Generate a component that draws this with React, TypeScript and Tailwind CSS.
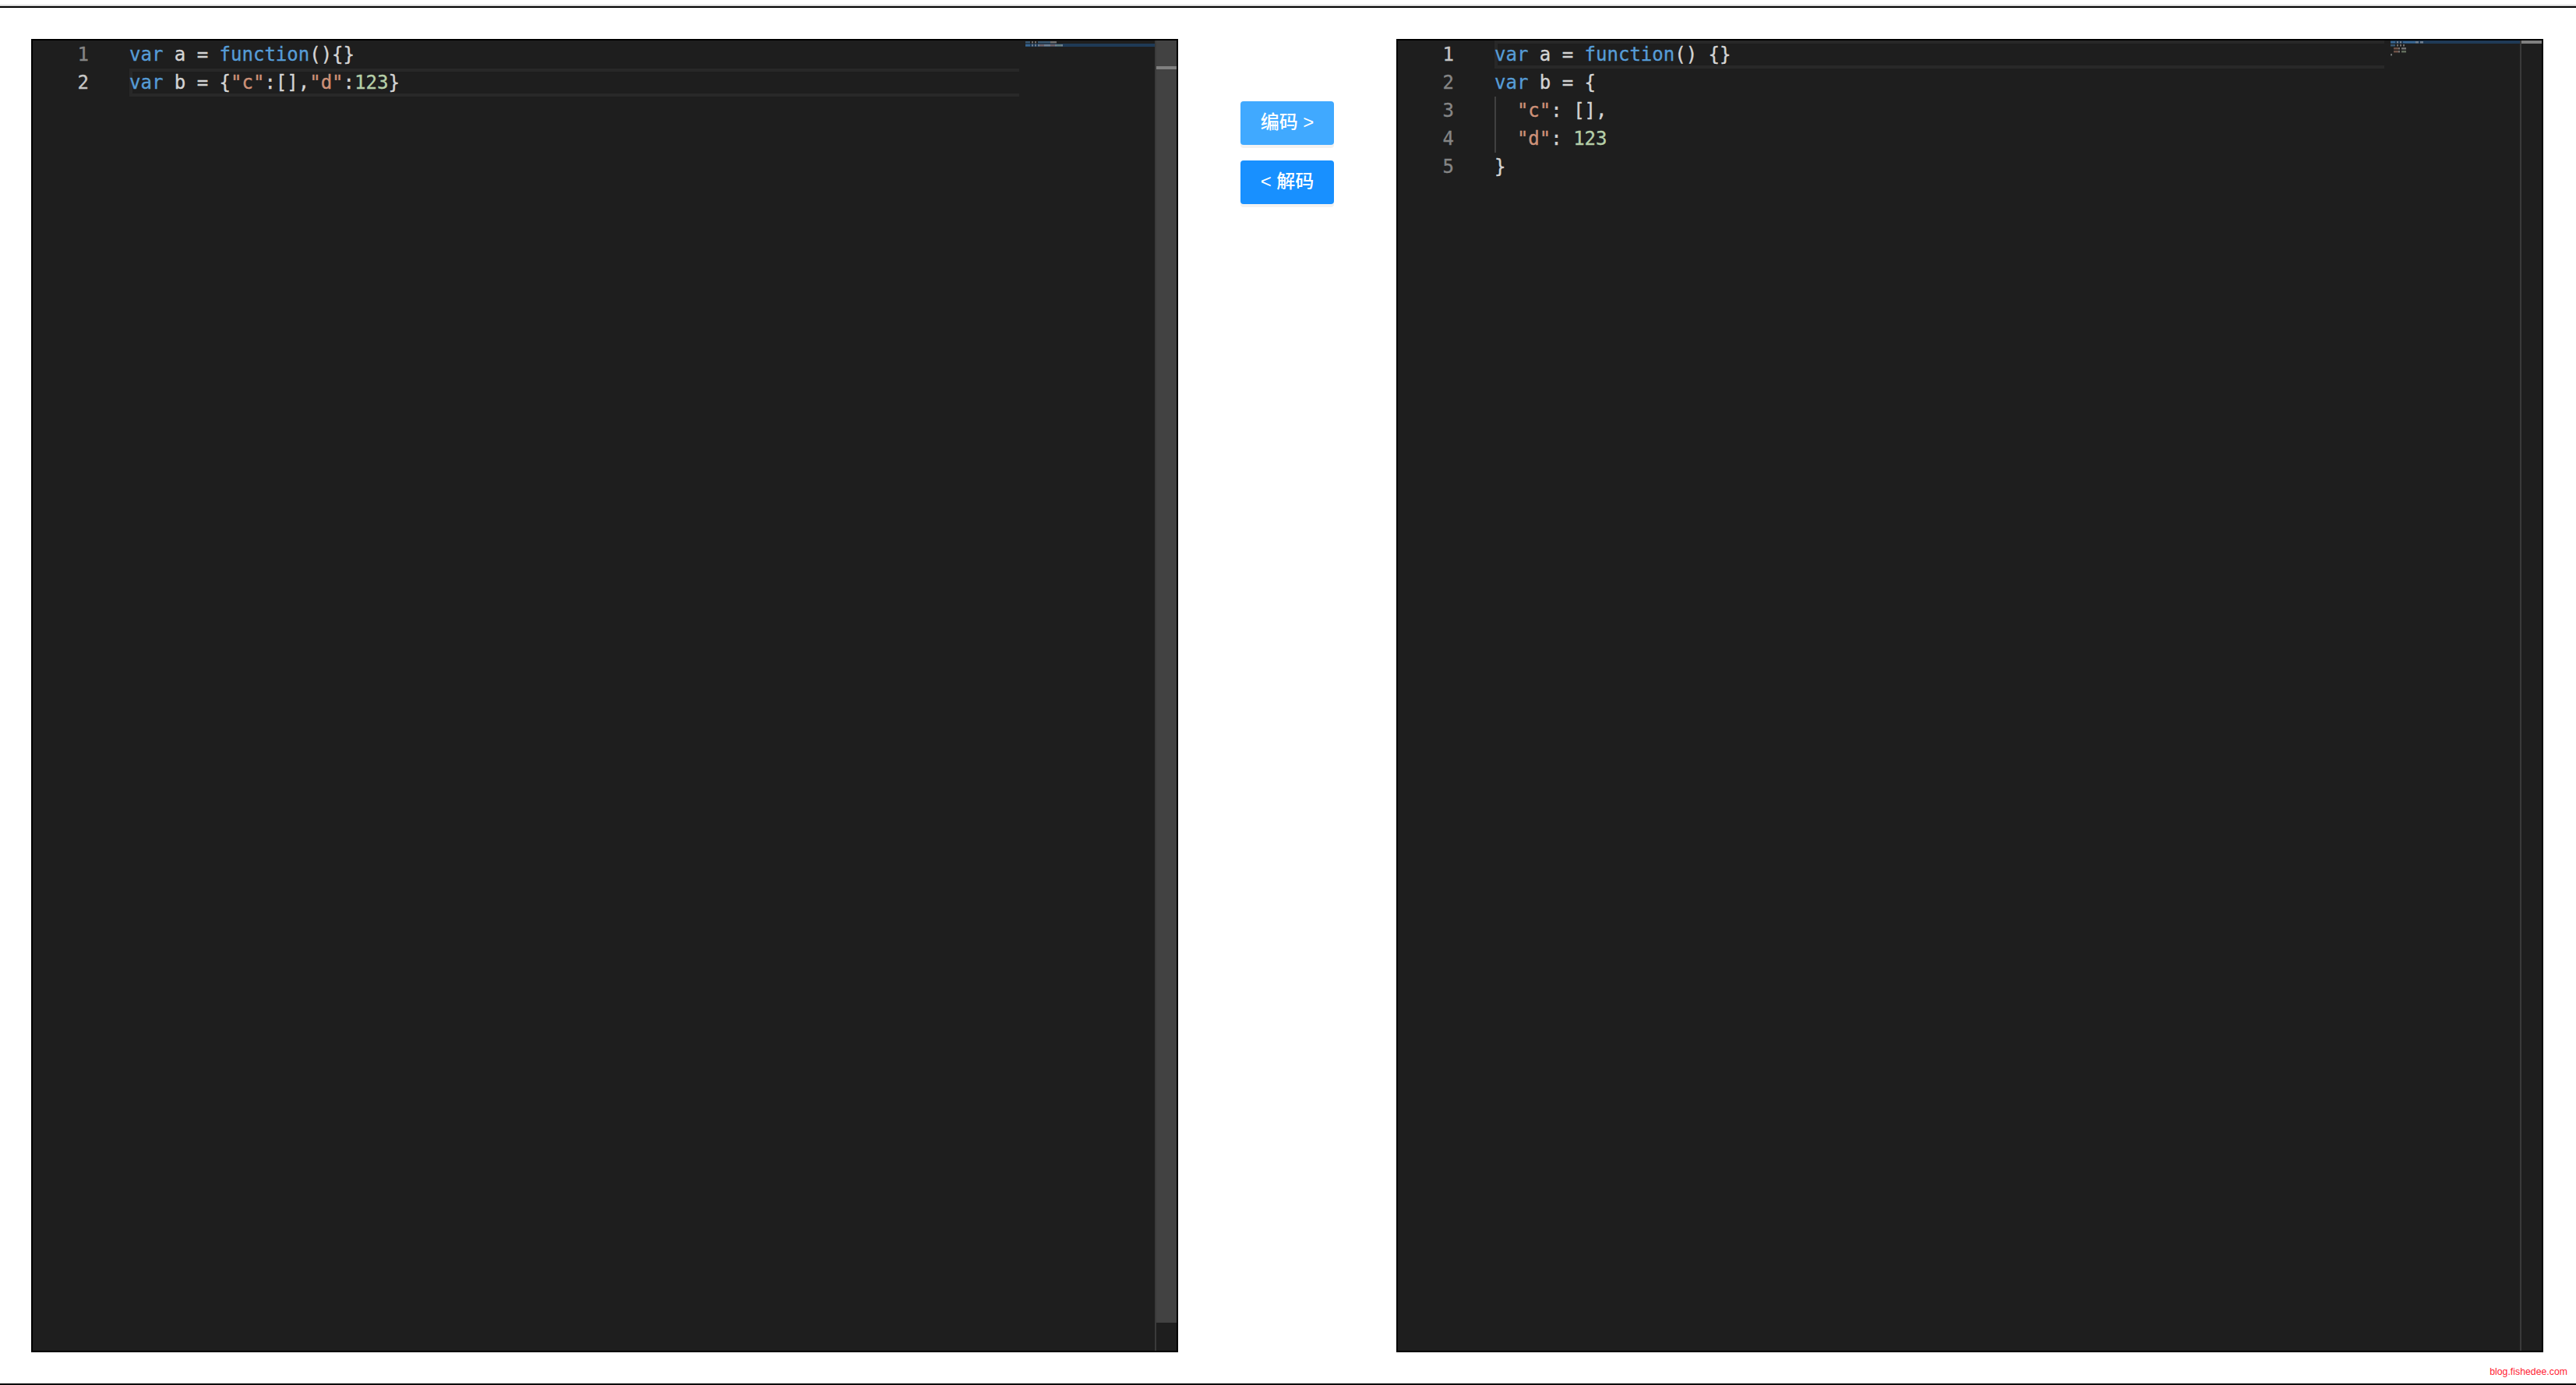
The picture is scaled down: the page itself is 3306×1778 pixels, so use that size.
const kinds = {
  kw: { text: "text-[#569cd6]", fill: "fill-[#569cd6]" },
  fg: { text: "text-[#d4d4d4]", fill: "fill-[#d4d4d4]" },
  str: { text: "text-[#ce9178]", fill: "fill-[#ce9178]" },
  num: { text: "text-[#b5cea8]", fill: "fill-[#b5cea8]" },
};

type Token = [string, keyof typeof kinds];

const leftLines: Token[][] = [
  [["var", "kw"], [" a = ", "fg"], ["function", "kw"], ["(){}", "fg"]],
  [["var", "kw"], [" b = {", "fg"], ['"c"', "str"], [":[],", "fg"], ['"d"', "str"], [":", "fg"], ["123", "num"], ["}", "fg"]],
];

const rightLines: Token[][] = [
  [["var", "kw"], [" a = ", "fg"], ["function", "kw"], ["() {}", "fg"]],
  [["var", "kw"], [" b = {", "fg"]],
  [["  ", "fg"], ['"c"', "str"], [": [],", "fg"]],
  [["  ", "fg"], ['"d"', "str"], [": ", "fg"], ["123", "num"]],
  [["}", "fg"]],
];

function Minimap({ lines, active }: { lines: Token[][]; active: number }) {
  return (
    <svg width="166" height="40" className="ml-[8px] block">
      <rect x="0" y={active * 4} width="166" height="4" className="fill-[#1f3a56]" />
      {lines.map((line, row) => {
        let col = 0;
        return line.map(([text, kind], t) =>
          text.split("").map((ch, i) => {
            const x = (col++) * 2;
            if (ch === " ") return null;
            return (
              <rect
                key={`${row}-${t}-${i}`}
                x={x}
                y={row * 4 + 1}
                width="2"
                height="2.5"
                opacity="0.45"
                className={kinds[kind].fill}
              />
            );
          })
        );
      })}
    </svg>
  );
}

function Editor({
  lines,
  active,
  guide,
  scrollbar,
}: {
  lines: Token[][];
  active: number;
  guide?: boolean;
  scrollbar: React.ReactNode;
}) {
  return (
    <div className="flex h-[1686px] w-[1472px] shrink-0 border-2 border-black bg-[#1e1e1e] font-['DejaVu_Sans_Mono',monospace] text-[24px] leading-[36px] [-webkit-text-stroke:0.35px]">
      <div className="w-[124px] shrink-0">
        {lines.map((_, i) => (
          <div
            key={i}
            className={`h-[36px] pr-[52px] text-right ${i === active ? "text-[#c6c6c6]" : "text-[#858585]"}`}
          >
            {i + 1}
          </div>
        ))}
      </div>
      <div className="relative w-[1142px] shrink-0">
        {lines.map((line, i) => (
          <div key={i} className="relative h-[36px] whitespace-pre">
            {i === active && (
              <div className="absolute inset-0 border-y-4 border-l-4 border-[#282828]" />
            )}
            <span className="relative">
              {line.map(([text, kind], t) => (
                <span key={t} className={kinds[kind].text}>
                  {text}
                </span>
              ))}
            </span>
          </div>
        ))}
        {guide && (
          <div className="absolute left-0 top-[72px] h-[72px] w-[2px] bg-[#404040]" />
        )}
      </div>
      <div className="w-[174px] shrink-0">
        <Minimap lines={lines} active={active} />
      </div>
      {scrollbar}
    </div>
  );
}

export default function App() {
  return (
    <div className="relative flex h-[1778px] w-[3306px] flex-col bg-white pt-[6px]">
      <div className="h-[2px] bg-[#d8d8d8]" />
      <div className="h-[2px] bg-black" />
      <div className="flex flex-1 items-start px-[40px] pt-[40px]">
        <Editor
          lines={leftLines}
          active={1}
          scrollbar={
            <div className="h-full w-[28px] shrink-0 border-l-2 border-[#3a3a3a]">
              <div className="h-[1646px] bg-[#424242] pt-[33px]">
                <div className="h-[4px] bg-[#808080]" />
              </div>
            </div>
          }
        />
        <div className="flex w-[280px] shrink-0 flex-col items-center gap-[20px] pt-[80px] font-['Liberation_Sans','Noto_Sans_CJK_SC',sans-serif] text-[24px] font-medium text-white">
          <button className="flex h-[56px] w-[120px] items-center justify-center rounded-[4px] bg-[#40a9ff] pb-[3px] shadow-[0_4px_0_rgba(0,0,0,0.05)]">
            编码 &gt;
          </button>
          <button className="flex h-[56px] w-[120px] items-center justify-center rounded-[4px] bg-[#1890ff] pb-[3px] shadow-[0_4px_0_rgba(0,0,0,0.05)]">
            &lt; 解码
          </button>
        </div>
        <Editor
          lines={rightLines}
          active={0}
          guide
          scrollbar={
            <div className="h-full w-[28px] shrink-0 border-l-2 border-[#3a3a3a]">
              <div className="h-[4px] bg-[#808080]" />
            </div>
          }
        />
      </div>
      <div className="h-[2px] bg-black" />
      <span className="absolute bottom-[9px] right-[11px] font-['Liberation_Sans',sans-serif] text-[12.3px] leading-[16px] text-[#ff2233]">
        blog.fishedee.com
      </span>
    </div>
  );
}
